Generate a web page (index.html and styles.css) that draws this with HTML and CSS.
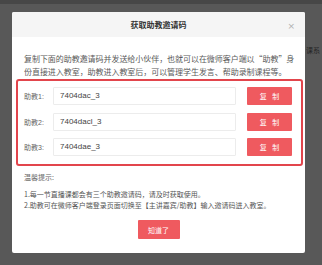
FILE: index.html
```html
<!DOCTYPE html>
<html lang="zh-CN">
<head>
<meta charset="utf-8">
<link rel="stylesheet" href="styles.css">
</head>
<body>
<div class="backdrop">
  <div class="bg-top"></div>
  <div class="bg-text">课系</div>
  <div class="modal">
    <div class="modal-header">
      <span class="modal-title">获取助教邀请码</span>
      <span class="modal-close">×</span>
    </div>
    <div class="modal-body">
      <p class="desc">复制下面的助教邀请码并发送给小伙伴，也就可以在微师客户端以“助教”身份直接进入教室，助教进入教室后，可以管理学生发言、帮助录制课程等。</p>
      <div class="codes">
        <div class="code-row">
          <span class="code-label">助教1:</span>
          <div class="code-input">7404dac_3</div>
          <button class="copy-btn">复 制</button>
        </div>
        <div class="code-row">
          <span class="code-label">助教2:</span>
          <div class="code-input">7404dacl_3</div>
          <button class="copy-btn">复 制</button>
        </div>
        <div class="code-row">
          <span class="code-label">助教3:</span>
          <div class="code-input">7404dae_3</div>
          <button class="copy-btn">复 制</button>
        </div>
      </div>
      <div class="notes">
        <div class="notes-title">温馨提示:</div>
        <div class="note">1.每一节直播课都会有三个助教邀请码，请及时获取使用。</div>
        <div class="note">2.助教可在微师客户端登录页面切换至【主讲嘉宾/助教】输入邀请码进入教室。</div>
      </div>
      <div class="footer">
        <button class="ok-btn">知道了</button>
      </div>
    </div>
  </div>
</div>
</body>
</html>
```

FILE: styles.css
```css
* { box-sizing: border-box; }
html, body {
  margin: 0;
  padding: 0;
}
body {
  width: 322px;
  height: 265px;
  overflow: hidden;
  background: #585858;
  font-family: "Noto Sans CJK SC", "Liberation Sans", sans-serif;
}
.backdrop {
  position: relative;
  height: 265px;
  padding: 12px 17px 0 12px;
}
.bg-top {
  position: absolute;
  left: 0;
  top: 0;
  right: 0;
  height: 4px;
  background: #474747;
}
.bg-text {
  position: absolute;
  left: 306px;
  top: 45px;
  font-size: 7px;
  line-height: 10px;
  color: #262626;
}
.modal {
  position: relative;
  width: 293px;
  background: #fff;
  border-radius: 2px;
  overflow: hidden;
}
.modal-header {
  height: 25px;
  background: #f5f5f5;
  display: flex;
  align-items: center;
  justify-content: center;
  position: relative;
}
.modal-title {
  font-size: 8px;
  font-weight: bold;
  color: #333;
  line-height: 12px;
  margin-top: 1px;
}
.modal-close {
  position: absolute;
  right: 10px;
  top: 9px;
  font-family: "DejaVu Sans", sans-serif;
  font-size: 9px;
  line-height: 10px;
  color: #b0b0b0;
}
.modal-body {
  padding: 15px 2px 14px 4px;
}
.desc {
  margin: 0 0 1px;
  padding: 0 6px 0 8px;
  font-size: 8px;
  line-height: 13px;
  color: #5a5a5a;
  letter-spacing: -0.05px;
}
.codes {
  border: 2px solid #e2454c;
  border-radius: 3px;
  padding: 6px 9px 8px 6px;
  display: flex;
  flex-direction: column;
  gap: 7.5px;
}
.code-row {
  display: flex;
  align-items: center;
  height: 18px;
}
.code-label {
  width: 29px;
  font-size: 7px;
  color: #666;
  font-family: "Liberation Sans", "Noto Sans CJK SC", sans-serif;
}
.code-input {
  width: 183px;
  height: 18px;
  border: 1px solid #ececec;
  border-radius: 1px;
  padding-left: 6px;
  font-family: "Liberation Sans", sans-serif;
  font-size: 8px;
  line-height: 16px;
  color: #444;
}
.copy-btn {
  margin-left: 11px;
  width: 45px;
  height: 18px;
  border: none;
  border-radius: 1px;
  background: #ef5a5f;
  color: #fff;
  font-family: "Noto Sans CJK SC", sans-serif;
  font-size: 7px;
  padding: 0 0 0 2px;
  letter-spacing: 2px;
}
.notes {
  padding: 5.5px 0 0 8px;
  color: #666;
  font-size: 7px;
  line-height: 11px;
}
.notes-title {
  margin-bottom: 6px;
}
.note {
  color: #555;
}
.footer {
  display: flex;
  justify-content: center;
  padding-top: 9.5px;
  margin-left: -2px;
}
.ok-btn {
  width: 42px;
  height: 19px;
  border: none;
  border-radius: 1px;
  background: #ef5a5f;
  color: #fff;
  font-family: "Noto Sans CJK SC", sans-serif;
  font-size: 7px;
  padding: 0;
}
```
